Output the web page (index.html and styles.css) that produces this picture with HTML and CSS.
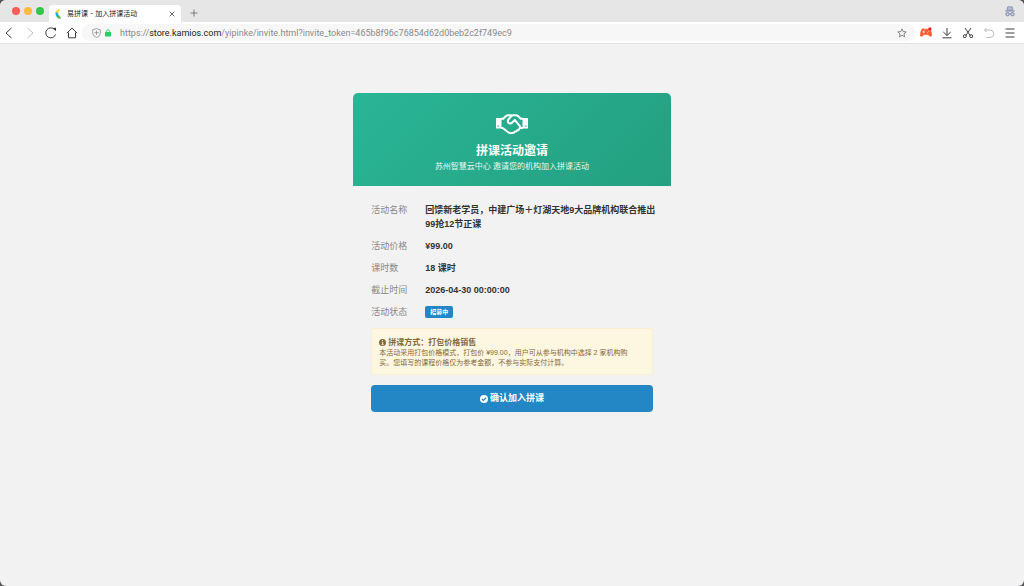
FILE: index.html
```html
<!DOCTYPE html>
<html lang="zh-CN">
<head>
<meta charset="utf-8">
<meta name="viewport" content="width=device-width, initial-scale=1">
<title>易拼课 - 加入拼课活动</title>
<link rel="stylesheet" href="styles.css">
</head>
<body>
<div class="window">
  <div class="tabbar">
    <div class="lights">
      <button class="light light-close" aria-label="关闭窗口"></button>
      <button class="light light-min" aria-label="最小化"></button>
      <button class="light light-max" aria-label="全屏"></button>
    </div>
    <div class="tab">
      <svg class="favicon" viewBox="0 0 9 10" aria-hidden="true"><path d="M6.300 0Q1.500.8 1.600 4.200L4.500 5.200Q4 2.500 6.300 0Z" fill="#f5d327"/><path d="M1.500 3Q1 6.500 3 8.500L5 6.500Q3.800 5.500 4 4.200Z" fill="#20aee5"/><path d="M2.800 8.200Q4.500 10 7 9.800L5.800 6.800Q4.500 6.900 4 6Z" fill="#58b947"/></svg>
      <span class="tab-title">易拼课 - 加入拼课活动</span>
      <button class="icon-btn" aria-label="关闭标签页"><svg width="6" height="6" viewBox="0 0 6 6"><path d="M.7.7l4.600 4.600M5.300.7L.7 5.300" stroke="#555" stroke-width=".9"/></svg></button>
    </div>
    <button class="icon-btn new-tab" aria-label="新标签页"><svg width="8" height="8" viewBox="0 0 8 8"><path d="M4 .5v7M.5 4h7" stroke="#666" stroke-width=".8"/></svg></button>
    <svg class="incognito" width="10" height="11" viewBox="0 0 10 11" aria-hidden="true"><path d="M2 4.200L2.600 1Q2.800.4 3.500.6L5 1 6.500.6Q7.200.4 7.400 1L8 4.200Z" fill="#b5bad0" stroke="#858dae" stroke-width=".8"/><path d="M.2 5h9.600" stroke="#858dae" stroke-width="1.100"/><path d="M4.200 8Q5 7.500 5.800 8" fill="none" stroke="#858dae"/><rect x=".8" y="6.600" width="3.500" height="3.200" rx="1.400" fill="#c4c8dc" stroke="#858dae"/><rect x="5.700" y="6.600" width="3.500" height="3.200" rx="1.400" fill="#c4c8dc" stroke="#858dae"/></svg>
  </div>
  <div class="toolbar">
    <div class="nav">
      <button class="icon-btn" aria-label="后退"><svg width="12" height="12" viewBox="0 0 12 12"><path d="M8.500 1L3 6l5.500 5" class="line"/></svg></button>
      <button class="icon-btn faded" aria-label="前进"><svg width="12" height="12" viewBox="0 0 12 12"><path d="M3.500 1L9 6l-5.500 5" class="line"/></svg></button>
      <button class="icon-btn" aria-label="刷新"><svg width="12" height="12" viewBox="0 0 12 12"><path d="M9.500 2.500A5 5 0 1 0 10.500 7.500" class="line"/><path d="M7.800 1L11 .8V4.300Z" fill="#333"/></svg></button>
      <button class="icon-btn" aria-label="主页"><svg width="12" height="12" viewBox="0 0 12 12"><path d="M.8 6.200L6 1.200l5.200 5M2.500 5.500v5.300h7V5.500" class="line"/></svg></button>
    </div>
    <div class="address">
      <svg width="9" height="10" viewBox="0 0 9 10" aria-hidden="true"><path d="M4.500.6L8.300 1.800v3.500Q8.300 8 4.500 9.500.7 8 .7 5.300V1.800Z" fill="none" stroke="#8b8b8b" stroke-width=".8"/><path d="M4.500 2.500v4.400M2.300 4.700h4.400" stroke="#8b8b8b" stroke-width=".8"/></svg>
      <svg width="6" height="8" viewBox="0 0 6 8" aria-hidden="true"><path d="M1.300 3.800V2.500a1.700 1.700 0 0 1 3.400 0v1.300" fill="none" stroke="#25cf61" stroke-width=".9"/><rect y="3" width="6" height="4.500" rx=".6" fill="#25cf61"/></svg>
      <div class="url" role="textbox" contenteditable="true" spellcheck="false" aria-label="地址">https://<span class="host">store.kamios.com</span>/yipinke/invite.html?invite_token=465b8f96c76854d62d0beb2c2f749ec9</div>
      <button class="icon-btn" aria-label="收藏"><svg width="10" height="10" viewBox="0 0 10 10"><path d="M5 .9l1.200 2.700 3 .3L7 5.900l.6 2.900L5 7.300 2.400 8.800 3 5.900.8 3.900l3-.3Z" fill="none" stroke="#777" stroke-width=".9"/></svg></button>
    </div>
    <div class="tools">
      <button class="icon-btn" aria-label="游戏"><svg width="12" height="12" viewBox="0 0 12 12"><path d="M3 1.500Q1.500 1.700.8 4.800.1 8.300.5 9 1.500 10.300 4 7.500h4q2.500 2.800 3.500 1.500.4-.7-.3-4.200Q10.500 1.700 9 1.500L7.500 2.200h-3Z" fill="#fa5c32" stroke="#fa5c32" stroke-width=".6"/><path d="M3.700 3.600v2.600M2.400 4.900H5M7 5.800h1M8.400 4.300h1" stroke="#fff" stroke-width=".7"/><circle cx="10" cy="1.800" r="1.600" fill="#ed2332"/></svg></button>
      <button class="icon-btn" aria-label="下载"><svg width="12" height="12" viewBox="0 0 12 12"><path d="M6 1v7.300M2.300 5L6 8.500 9.700 5M1.500 10.800h9" class="line"/></svg></button>
      <button class="icon-btn" aria-label="截图"><svg width="12" height="12" viewBox="0 0 12 12"><path d="M3 1l5.200 7.500M9 1L3.800 8.500" class="line"/><circle cx="2.800" cy="9.200" r="1.500" class="line"/><circle cx="9.200" cy="9.200" r="1.500" class="line"/></svg></button>
      <button class="icon-btn faded" aria-label="恢复"><svg width="12" height="12" viewBox="0 0 12 12"><path d="M3.500 1L1.500 3l2 2M1.500 3H7a3.700 3.700 0 0 1 0 7.500H3.500" class="line"/></svg></button>
      <button class="icon-btn" aria-label="菜单"><svg width="12" height="12" viewBox="0 0 12 12"><path d="M1.500 2h9M1.500 6h9M1.500 10h9" class="line"/></svg></button>
    </div>
  </div>
  <main class="page">
    <section class="card">
      <header class="card-head">
        <svg class="handshake" viewBox="0 0 32 21" aria-hidden="true"><path d="M0 4h5.500v10.500H0zM26.500 4H32v10.500h-5.500z" fill="#fff"/><path d="M1.500 12h1.700M28.800 12h1.700" stroke="#28ab8b" stroke-width="1.200"/><path d="M5 4.800h2.200L10 2Q11 1.200 12.200 1.200h3.200M5 14h1.700l5.500 4.300Q14 19.700 15.800 18.900q1.700.3 2.900-1.100 1.700.1 2.500-1.500 2 0 2.500-2.300H27M27 4.800h-2.200L22 2Q21 1.200 19.800 1.200h-2.600Q16 1.200 15.200 2.200L12.300 5.700Q11.300 7.300 12.500 8.700q1.800 1.600 3.500 0L18.800 6l4.700 5.700Q24.500 13 23.700 14" fill="none" stroke="#fff" stroke-width="2" stroke-linejoin="round"/></svg>
        <h1 class="title">拼课活动邀请</h1>
        <p class="subtitle">苏州智慧云中心 邀请您的机构加入拼课活动</p>
      </header>
      <div class="card-body">
        <dl class="details">
          <dt>活动名称</dt><dd>回馈新老学员，中建广场＋灯湖天地9大品牌机构联合推出<br>99抢12节正课</dd>
          <dt>活动价格</dt><dd>¥99.00</dd>
          <dt>课时数</dt><dd>18 课时</dd>
          <dt>截止时间</dt><dd>2026-04-30 00:00:00</dd>
          <dt>活动状态</dt><dd class="status"><span class="badge">招募中</span></dd>
        </dl>
        <div class="notice">
          <h2 class="notice-title"><svg width="7" height="7" viewBox="0 0 7 7" aria-hidden="true"><circle cx="3.500" cy="3.500" r="3.500" fill="#84683a"/><path d="M3.500 1v1.200M2.700 3.200h1v2M2.500 5.400h2.100" fill="none" stroke="#fdf6e0" stroke-width=".9"/></svg>拼课方式：打包价格销售</h2>
          <p class="notice-text">本活动采用打包价格模式，打包价 ¥99.00，用户可从参与机构中选择 2 家机构购<br>买。您填写的课程价格仅为参考金额，不参与实际支付计算。</p>
        </div>
        <button class="confirm"><svg width="8" height="8" viewBox="0 0 8 8" aria-hidden="true"><circle cx="4" cy="4" r="4" fill="#fff"/><path d="M1.900 4l1.500 1.500 2.800-2.800" fill="none" stroke="#2386c5" stroke-width="1.200"/></svg>确认加入拼课</button>
      </div>
    </section>
  </main>
</div>
</body>
</html>
```
FILE: styles.css
```css
* { box-sizing: border-box; }

body {
  margin: 0;
  background: #59595c;
  font-family: "Liberation Sans", "Noto Sans CJK SC", sans-serif;
}

h1, h2, p, dl, dd { margin: 0; }

button { font-family: inherit; border: 0; padding: 0; cursor: pointer; }

svg { display: block; flex: none; }

.window {
  display: flex;
  flex-direction: column;
  min-height: 100vh;
  border-radius: 6px;
  overflow: hidden;
  background: #f2f2f2;
}

.tabbar {
  display: flex;
  align-items: center;
  height: 22px;
  padding: 0 9px 0 12px;
  background: #e6e6e6;
}

.lights { display: flex; gap: 4px; margin-right: 5px; }
.light { width: 8px; height: 8px; border-radius: 50%; }
.light-close { background: #fc5b57; }
.light-min { background: #fdb940; }
.light-max { background: #34c648; }

.tab {
  display: flex;
  align-items: center;
  align-self: flex-end;
  width: 132px;
  height: 17px;
  padding: 0 6px 0 5px;
  border-radius: 4px 4px 0 0;
  background: #fff;
}

.favicon { width: 9px; height: 10px; margin-right: 4px; }
.tab-title {
  flex: 1;
  font-size: 7px;
  line-height: 16px;
  white-space: nowrap;
  color: #222;
  font-family: Inter, "Noto Sans CJK SC", sans-serif;
}

.icon-btn {
  display: flex;
  align-items: center;
  justify-content: center;
  background: transparent;
}
.new-tab { margin-left: 9px; padding-top: 3px; }
.incognito { margin-left: auto; }

.toolbar {
  display: flex;
  align-items: center;
  height: 22px;
  padding: 0 8px 0 3px;
  border-bottom: 1px solid #e3e3e3;
  background: #fff;
}

.nav { display: flex; gap: 9px; }
.line { fill: none; stroke: #3c3c3c; stroke-width: 1; }
.faded { opacity: .35; }

.address {
  display: flex;
  align-items: center;
  flex: 1;
  height: 17px;
  gap: 4px;
  margin: 0 5px 0 4px;
  padding: 0 8px 0 10px;
  border-radius: 8px;
  background: #f7f7f7;
}

.url {
  flex: 1;
  padding-left: 5px;
  font-family: Roboto, sans-serif;
  font-size: 9px;
  line-height: 16px;
  white-space: nowrap;
  color: #8a8a8a;
  outline: 0;
}
.host { color: #222; }

.tools { display: flex; gap: 9px; }

.page {
  display: flex;
  flex: 1;
  justify-content: center;
  align-items: flex-start;
  padding-top: 49px;
}

.card { width: 31%; min-width: 316px; }

.card-head {
  display: flex;
  flex-direction: column;
  align-items: center;
  padding: 21px 18px 13px;
  border-radius: 5px 5px 0 0;
  background: linear-gradient(135deg, #2ab597, #23a07f);
  color: #fff;
}

.handshake { width: 32px; height: 21px; margin-bottom: 7px; }
.title { font-size: 12px; line-height: 18px; }
.subtitle { padding-top: 1px; font-size: 8px; line-height: 12px; color: #e8f7f2; }

.card-body { padding: 17px 18px 0; }

.details {
  display: grid;
  grid-template-columns: 54px 1fr;
  row-gap: 8px;
  font-size: 9px;
  line-height: 14px;
  color: #333;
}
.details dt { color: #888; }
.details dd { font-weight: bold; white-space: nowrap; }
.details .status { display: flex; align-items: center; }

.badge {
  padding: 0 5px;
  border-radius: 2px;
  background: #2386c5;
  color: #fff;
  font-size: 6px;
  line-height: 12px;
}

.notice {
  margin-top: 9px;
  padding: 8px 7px 6px;
  border: 1px solid #faefd2;
  border-radius: 3px;
  background: #fdf6e0;
  color: #84683a;
}
.notice-title {
  display: flex;
  align-items: center;
  gap: 2px;
  font-size: 8px;
  line-height: 11px;
}
.notice-text { font-size: 7px; line-height: 10px; white-space: nowrap; }

.confirm {
  display: flex;
  align-items: center;
  justify-content: center;
  gap: 2px;
  width: 100%;
  margin-top: 10px;
  padding: 6px 0;
  border-radius: 4px;
  background: #2386c5;
  color: #fff;
  font-size: 9px;
  font-weight: bold;
  line-height: 15px;
}
```
